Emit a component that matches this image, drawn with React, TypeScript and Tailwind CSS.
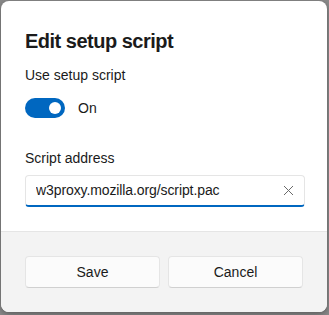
import React, { useState } from 'react';

const font = { fontFamily: '"Segoe UI", "Liberation Sans", sans-serif' };

const App: React.FC = () => {
  const [enabled, setEnabled] = useState(true);
  const [address, setAddress] = useState('w3proxy.mozilla.org/script.pac');

  return (
    <div className="w-[329px] h-[315px] bg-[#8a8a8a] pl-px pt-px" style={font}>
      <div className="w-[326px] h-[311px] bg-white rounded-lg overflow-hidden flex flex-col shadow-[0_2px_6px_rgba(0,0,0,0.35)]">
        <div className="px-6 pt-[26px] pb-6 flex flex-col">
          <h1 className="text-[20px] leading-[28px] font-semibold tracking-[-0.5px] text-[#1b1b1b]">Edit setup script</h1>
          <p className="mt-[10px] text-[14px] leading-[20px] text-[#1a1a1a]">Use setup script</p>
          <div className="mt-[13px] flex items-center h-5">
            <button
              onClick={() => setEnabled(!enabled)}
              className={`w-10 h-5 rounded-full flex items-center px-1 ${enabled ? 'bg-[#0067c0] justify-end' : 'bg-white border border-[#8a8a8a] justify-start'}`}
            >
              <span className={`w-3 h-3 rounded-full ${enabled ? 'bg-white' : 'bg-[#5d5d5d]'}`} />
            </button>
            <span className="ml-[13px] text-[14px] text-[#1a1a1a]">{enabled ? 'On' : 'Off'}</span>
          </div>
          <label className="mt-[30px] text-[14px] leading-[20px] text-[#1a1a1a]">Script address</label>
          <div className="mt-[7px] h-8 w-[280px] flex items-center bg-white border border-[#e5e5e5] border-b-2 border-b-[#0067c0] rounded-[4px] pl-[10px] pr-[8px]">
            <input
              value={address}
              onChange={(e) => setAddress(e.target.value)}
              className="flex-1 min-w-0 outline-none text-[14px] tracking-[-0.1px] text-[#1a1a1a] bg-transparent"
              style={font}
            />
            <button onClick={() => setAddress('')} className="w-4 h-4 flex items-center justify-center text-[#6a6a6a]">
              <svg width="11" height="11" viewBox="0 0 11 11" fill="none" stroke="currentColor" strokeWidth="1">
                <path d="M1 1 L10 10 M10 1 L1 10" />
              </svg>
            </button>
          </div>
        </div>
        <div className="flex-1 bg-[#f3f3f3] border-t border-[#e5e5e5] px-6 flex items-center gap-2">
          <button className="flex-1 h-8 bg-[#fbfbfb] border border-[#e5e5e5] border-b-[#d0d0d0] rounded-[4px] text-[14px] text-[#1a1a1a]">Save</button>
          <button className="flex-1 h-8 bg-[#fbfbfb] border border-[#e5e5e5] border-b-[#d0d0d0] rounded-[4px] text-[14px] text-[#1a1a1a]">Cancel</button>
        </div>
      </div>
    </div>
  );
};

export default App;
